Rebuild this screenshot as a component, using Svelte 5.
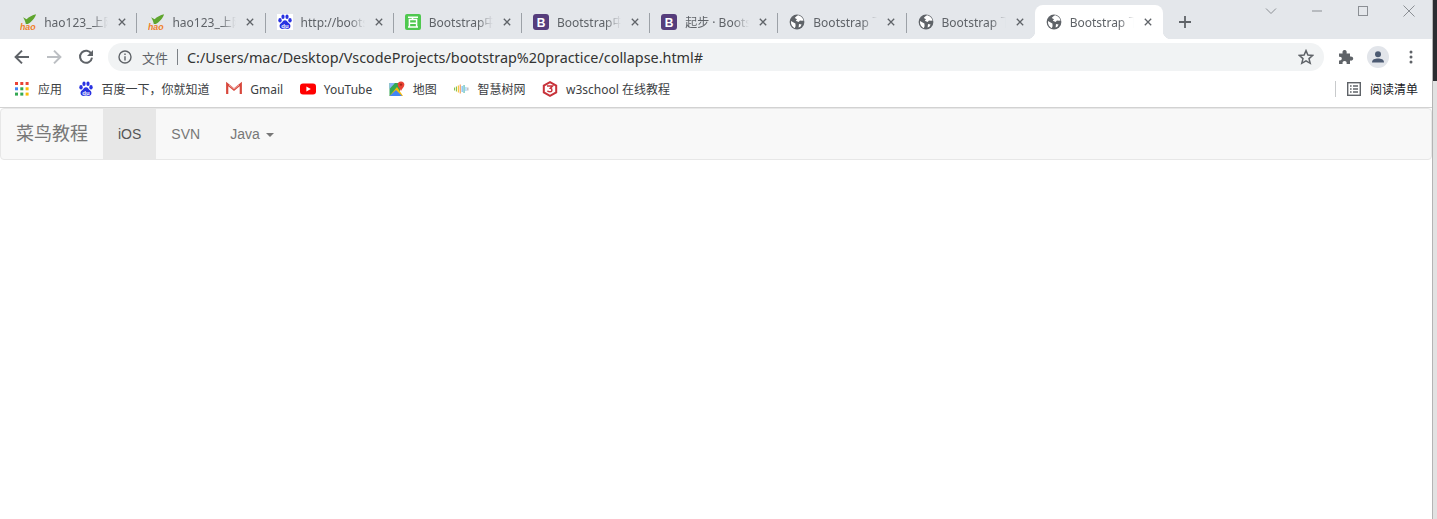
<script>
  const tabs = [
    { icon: 'hao', title: 'hao123_上网从这里开始' },
    { icon: 'hao', title: 'hao123_上网从这里开始' },
    { icon: 'baidu', title: 'http://bootstrap' },
    { icon: 'bai', title: 'Bootstrap中文网' },
    { icon: 'b', title: 'Bootstrap中文网' },
    { icon: 'b', title: '起步 · Bootstrap' },
    { icon: 'globe', title: 'Bootstrap 下拉' },
    { icon: 'globe', title: 'Bootstrap 下拉' },
    { icon: 'globe', title: 'Bootstrap 下拉', active: true }
  ];
  const bookmarks = [
    { icon: 'apps', label: '应用' },
    { icon: 'baidu', label: '百度一下，你就知道' },
    { icon: 'gmail', label: 'Gmail' },
    { icon: 'youtube', label: 'YouTube' },
    { icon: 'maps', label: '地图' },
    { icon: 'bars', label: '智慧树网' },
    { icon: 'w3', label: 'w3school 在线教程' }
  ];
  const appColors = ['#ea4335','#ea4335','#ea4335','#4285f4','#34a853','#fbbc04','#34a853','#34a853','#fbbc04'];
  const barHeights = [
    ['#8bc34a', 3], ['#8bc34a', 5], ['#fbc02d', 7], ['#ef9a5a', 9], ['#64b5f6', 6], ['#4db6ac', 8], ['#90caf9', 4], ['#aaa', 3]
  ];
</script>

{#snippet favicon(name)}
  {#if name === 'hao'}
    <svg class="fav" viewBox="0 0 16 16">
      <path d="M3 3.2 L6.6 5.2 C9 2.8 12.4 1 16 0.2 C15.2 4 11.4 8 7.8 10 L5.8 10 C5.4 7.4 4.4 5.2 3 3.2 Z" fill="#5fa52e"/>
      <text x="0" y="16" class="hao">hao</text>
    </svg>
  {:else if name === 'baidu'}
    <svg class="fav" viewBox="0 0 16 16">
      <rect width="16" height="16" fill="#fff"/>
      <g fill="#2932e1">
        <ellipse cx="3" cy="6.2" rx="1.7" ry="2.2"/>
        <ellipse cx="6" cy="2.8" rx="1.6" ry="2.2"/>
        <ellipse cx="10" cy="2.8" rx="1.6" ry="2.2"/>
        <ellipse cx="13" cy="6.2" rx="1.7" ry="2.2"/>
        <path d="M8 6.2 C6 6.2 5.6 8 4.4 9 C3 10 2.4 11 2.6 12.6 C3 15 5 15.2 6.4 14.8 C7.6 14.5 8.4 14.5 9.6 14.8 C11 15.2 13 15 13.4 12.6 C13.6 11 13 10 11.6 9 C10.4 8 10 6.2 8 6.2 Z"/>
      </g>
      <text x="8" y="13.6" class="du">du</text>
    </svg>
  {:else if name === 'bai'}
    <svg class="fav" viewBox="0 0 16 16">
      <rect width="16" height="16" rx="2" fill="#4fc84f"/>
      <path d="M3 3.2 H13 M8 3.4 L7 5.5 M4.4 5.6 H11.6 V13 H4.4 Z M4.4 9.2 H11.6 M3 13 H13" fill="none" stroke="#fff" stroke-width="1.5"/>
    </svg>
  {:else if name === 'b'}
    <svg class="fav" viewBox="0 0 16 16">
      <rect width="16" height="16" rx="3" fill="#563d7c"/>
      <text x="8" y="12.6" class="bs">B</text>
    </svg>
  {:else if name === 'globe'}
    <svg class="fav" viewBox="0 0 16 16">
      <circle cx="8" cy="8" r="7.4" fill="#5f6368"/>
      <path d="M9.2 1.2 C7.8 2 6.4 2.6 5.8 4 L8 5.2 L6.8 6.8 L9.6 8 L11 6.4 L13 6.8 L14.6 6.4 C14 4 12 1.8 9.2 1.2 Z M2 7 L4.6 8.4 L6.4 9.6 L6.6 12 L5.8 14.2 C3.4 13 1.6 10.6 2 7 Z M10 10 L12.6 10.4 L11.4 12.8 L9.6 13.4 Z" fill="#fff"/>
    </svg>
  {:else if name === 'apps'}
    <svg class="fav" viewBox="0 0 14 14">
      {#each appColors as color, i}
        <rect x={(i % 3) * 5.3} y={Math.floor(i / 3) * 5.3} width="3" height="3" fill={color}/>
      {/each}
    </svg>
  {:else if name === 'gmail'}
    <svg class="fav" viewBox="0 0 16 16">
      <path d="M1.2 13 V3 L8 8.6 L14.8 3 V13" fill="none" stroke="#d8473c" stroke-width="2.2"/>
      <path d="M3 4 L8 8 L13 4" fill="none" stroke="#eda8a2" stroke-width="1"/>
    </svg>
  {:else if name === 'youtube'}
    <svg class="fav" viewBox="0 0 16 16">
      <rect x="0" y="2.4" width="16" height="11.2" rx="3" fill="#f00"/>
      <path d="M6.4 5.4 L10.8 8 L6.4 10.6 Z" fill="#fff"/>
    </svg>
  {:else if name === 'maps'}
    <svg class="fav" viewBox="0 0 16 16">
      <path d="M0.5 2 H11 V15 H0.5 Z" fill="#34a853"/>
      <path d="M0.5 15 L8 6 L14 15 Z" fill="#fbbc04"/>
      <path d="M0.5 15 L7 9 L13 15 Z" fill="#4285f4"/>
      <path d="M0.5 2 H6 L0.5 8 Z" fill="#8ab4f8"/>
      <path d="M12 0.4 C9.8 0.4 8.6 2 8.6 3.6 C8.6 6 11 7.4 12 10 C13 7.4 15.4 6 15.4 3.6 C15.4 2 14.2 0.4 12 0.4 Z" fill="#ea4335"/>
      <circle cx="12" cy="3.6" r="1.2" fill="#a52714"/>
    </svg>
  {:else if name === 'bars'}
    <svg class="fav" viewBox="0 0 16 16">
      {#each barHeights as [color, h], i}
        <rect x={1 + i * 1.9} y={8 - h / 2} width="1.1" height={h} fill={color}/>
      {/each}
    </svg>
  {:else if name === 'w3'}
    <svg class="fav" viewBox="0 0 16 16">
      <path d="M8 1.2 L14.2 4.6 V11.4 L8 14.8 L1.8 11.4 V4.6 Z" fill="none" stroke="#c8323a" stroke-width="2"/>
      <path d="M5 5 H10.6 L8.4 7.3 C10.4 7.6 10.6 10.8 8 10.8 C7 10.8 6.2 10.4 5.4 9.8" fill="none" stroke="#c8323a" stroke-width="1.5"/>
    </svg>
  {/if}
{/snippet}

<div class="screen">
  <div class="browser">
    <div class="tabstrip">
      <div class="tabs">
        {#each tabs as tab, i}
          <div class="tab" class:active={tab.active} class:nosep={tab.active || tabs[i + 1]?.active}>
            {@render favicon(tab.icon)}
            <span class="tab-title">{tab.title}</span>
            <svg class="tab-close" viewBox="0 0 10 10"><path d="M1 1 L9 9 M9 1 L1 9"/></svg>
          </div>
        {/each}
      </div>
      <svg class="new-tab" viewBox="0 0 12 12"><path d="M6 0 V12 M0 6 H12"/></svg>
      <div class="win-controls">
        <svg class="win" viewBox="0 0 12 12"><path d="M1 3.5 L6 8.5 L11 3.5"/></svg>
        <svg class="win" viewBox="0 0 12 12"><path d="M1 6 H11"/></svg>
        <svg class="win" viewBox="0 0 12 12"><rect x="1.5" y="1.5" width="9" height="9"/></svg>
        <svg class="win" viewBox="0 0 12 12"><path d="M0.5 0.5 L11.5 11.5 M11.5 0.5 L0.5 11.5"/></svg>
      </div>
    </div>

    <div class="toolbar">
      <div class="nav-btns">
        <svg class="tool" viewBox="0 0 16 16"><path d="M15 8 H2 M8 1.6 L1.6 8 L8 14.4" class="stroke-dark"/></svg>
        <svg class="tool" viewBox="0 0 16 16"><path d="M1 8 H14 M8 1.6 L14.4 8 L8 14.4" class="stroke-light"/></svg>
        <svg class="tool" viewBox="0 0 16 16"><path d="M13.4 5 A6 6 0 1 0 14 8.6" class="stroke-dark"/><path d="M15 1 V7 H9 Z" class="fill-dark"/></svg>
      </div>
      <div class="omnibox">
        <svg class="info" viewBox="0 0 14 14"><circle cx="7" cy="7" r="6"/><path d="M7 6.2 V10.4 M7 3.6 V5"/></svg>
        <span class="scheme">文件</span>
        <span class="omni-sep"></span>
        <span class="url">C:/Users/mac/Desktop/VscodeProjects/bootstrap%20practice/collapse.html#</span>
        <svg class="star" viewBox="0 0 16 16"><path d="M8 1.6 L9.9 6 L14.7 6.4 L11 9.6 L12.2 14.3 L8 11.8 L3.8 14.3 L5 9.6 L1.3 6.4 L6.1 6 Z"/></svg>
      </div>
      <div class="tool-right">
        <svg class="puzzle" viewBox="0 0 16 16"><path d="M1 4.4 H4.6 C4.2 2.6 4.8 1 6.6 1 C8.4 1 9 2.6 8.6 4.4 H12 V7.6 C13.8 7.2 15.2 8 15.2 9.6 C15.2 11.2 13.8 12 12 11.6 V15 H8.6 C9 13.2 8.2 12 6.6 12 C5 12 4.2 13.2 4.6 15 H1 V11.4 C2.6 11.8 3.8 11 3.8 9.6 C3.8 8.2 2.6 7.4 1 7.8 Z"/></svg>
        <svg class="avatar" viewBox="0 0 22 22"><circle cx="11" cy="11" r="11" fill="#e2e5ea"/><circle cx="11" cy="8.2" r="3" fill="#4c5a72"/><path d="M5 16.4 C5 13.2 8 12.4 11 12.4 C14 12.4 17 13.2 17 16.4 Z" fill="#4c5a72"/></svg>
        <svg class="dots" viewBox="0 0 4 14"><circle cx="2" cy="2" r="1.5"/><circle cx="2" cy="7" r="1.5"/><circle cx="2" cy="12" r="1.5"/></svg>
      </div>
    </div>

    <div class="bookmarks">
      {#each bookmarks as b}
        <div class="bookmark">
          {@render favicon(b.icon)}
          <span>{b.label}</span>
        </div>
      {/each}
      <div class="reading">
        <span class="read-sep"></span>
        <svg class="read-icon" viewBox="0 0 14 14"><rect x="0.7" y="0.7" width="12.6" height="12.6"/><path d="M3 4 H4.6 M6 4 H11 M3 7 H4.6 M6 7 H11 M3 10 H4.6 M6 10 H11"/></svg>
        <span class="read-label">阅读清单</span>
      </div>
    </div>

    <main class="page">
      <nav class="navbar">
        <a class="brand" href="#top">菜鸟教程</a>
        <ul class="nav">
          <li class="on"><a href="#ios">iOS</a></li>
          <li><a href="#svn">SVN</a></li>
          <li><a href="#java">Java <b class="caret"></b></a></li>
        </ul>
      </nav>
    </main>
  </div>
  <div class="edge">
    <div class="edge-dark"></div>
    <div class="edge-grey"></div>
  </div>
</div>

<style>
  :global(body) { margin: 0; background: #fff; overflow: hidden; }
  .screen { display: flex; width: 1437px; height: 519px; font-family: "Noto Sans", "Noto Sans CJK SC", sans-serif; }
  .browser { width: 1432px; display: flex; flex-direction: column; flex: none; }
  .edge { flex: 1; display: flex; flex-direction: column; border-left: 1px solid #b4b4b4; box-sizing: border-box; }
  .edge-dark { height: 81px; background: #2b2d31; }
  .edge-grey { flex: 1; background: #e2e2e2; }

  .tabstrip { height: 39px; background: #e4e7eb; display: flex; align-items: flex-start; flex: none; }
  .tabs { display: flex; padding: 5px 0 0 9.2px; }
  .tab { position: relative; width: 128.2px; height: 34px; box-sizing: border-box; padding-left: 11px; display: flex; align-items: center; flex: none; }
  .tab::after { content: ""; position: absolute; right: 0; top: 8px; width: 1px; height: 20px; background: #9ca1a7; }
  .tab.nosep::after { display: none; }
  .tab.active { background: #fff; border-radius: 8px 8px 0 0; }
  .tab.active::before { content: ""; position: absolute; left: -8px; bottom: 0; width: 8px; height: 8px; background: radial-gradient(circle at 0 0, transparent 8px, #fff 8.5px); }
  .tab.active::after { display: block; right: -8px; top: auto; bottom: 0; width: 8px; height: 8px; background: radial-gradient(circle at 100% 0, transparent 8px, #fff 8.5px); }
  .fav { width: 16px; height: 16px; flex: none; display: block; }
  .tab-title { margin-left: 8px; width: 64px; overflow: hidden; white-space: nowrap; font-size: 12px; color: #5f6368; flex: none; -webkit-mask-image: linear-gradient(90deg, #000 76%, transparent 100%); mask-image: linear-gradient(90deg, #000 76%, transparent 100%); }
  .tab-close { width: 8px; height: 8px; margin-left: 10px; flex: none; fill: none; stroke: #5f6368; stroke-width: 1.6; }
  .hao { font: italic 700 8.8px "Liberation Sans", sans-serif; fill: #f0802a; }
  .du { font: 700 6px "Liberation Sans", sans-serif; fill: #fff; text-anchor: middle; }
  .bs { font: 700 12px "Liberation Sans", sans-serif; fill: #fff; text-anchor: middle; }
  .new-tab { width: 12px; height: 12px; margin: 16px 0 0 16px; flex: none; fill: none; stroke: #5f6368; stroke-width: 1.8; }
  .win-controls { margin-left: auto; display: flex; padding: 5px 17.5px 0 0; gap: 34px; }
  .win { width: 12px; height: 12px; fill: none; stroke: #8b8f94; stroke-width: 1; flex: none; }

  .toolbar { height: 28px; background: #fff; display: flex; padding-top: 4px; flex: none; }
  .nav-btns { width: 108px; display: flex; align-items: center; padding-left: 14px; gap: 16px; box-sizing: border-box; flex: none; }
  .tool { width: 16px; height: 16px; fill: none; flex: none; }
  .stroke-dark { stroke: #5f6368; stroke-width: 2; fill: none; }
  .stroke-light { stroke: #bcbfc3; stroke-width: 2; fill: none; }
  .fill-dark { fill: #5f6368; }
  .omnibox { width: 1216px; height: 28px; background: #f1f3f4; border-radius: 14px; display: flex; align-items: center; padding: 0 10px; box-sizing: border-box; flex: none; }
  .info { width: 14px; height: 14px; fill: none; stroke: #5f6368; stroke-width: 1.4; flex: none; }
  .scheme { margin-left: 10px; font-size: 13px; color: #5f6368; }
  .omni-sep { width: 1px; height: 16px; background: #7c8186; margin: 0 9px; }
  .url { font-size: 14.4px; color: #333; white-space: nowrap; letter-spacing: -0.015px; }
  .star { width: 16px; height: 16px; margin-left: auto; fill: none; stroke: #5f6368; stroke-width: 1.5; flex: none; }
  .tool-right { flex: 1; display: flex; align-items: center; padding-left: 14px; }
  .puzzle { width: 16px; height: 16px; fill: #5f6368; flex: none; }
  .avatar { width: 22px; height: 22px; margin-left: 13px; flex: none; }
  .dots { width: 4px; height: 14px; margin-left: 20px; fill: #5f6368; flex: none; }

  .bookmarks { height: 36px; background: #fff; border-bottom: 1px solid #d2d2d2; display: flex; align-items: center; padding: 0 14px 0 15px; gap: 16.6px; flex: none; }
  .bookmark { display: flex; align-items: center; gap: 8px; font-size: 12px; color: #3c4043; white-space: nowrap; }
  .bookmark:first-child .fav { width: 14px; height: 14px; margin-right: 1px; }
  .bookmark:nth-child(2) { margin-left: -1px; }
  .reading { margin-left: auto; display: flex; align-items: center; }
  .read-sep { width: 1px; height: 16px; background: #c8cacc; }
  .read-icon { width: 14px; height: 14px; margin: 0 9px 0 11px; fill: none; stroke: #5f6368; stroke-width: 1.4; flex: none; }
  .read-label { font-size: 12px; color: #202124; }

  .page { flex: 1; background: #fff; font-family: "Liberation Sans", "Noto Sans CJK SC", sans-serif; }
  .navbar { display: flex; height: 52px; box-sizing: border-box; background: #f8f8f8; border: 1px solid #e7e7e7; border-radius: 4px; }
  .brand { padding: 0 15px; font-size: 18px; line-height: 50px; color: #777; text-decoration: none; }
  .nav { display: flex; list-style: none; margin: 0; padding: 0; }
  .nav a { display: block; padding: 0 15px; font-size: 14px; line-height: 50px; color: #777; text-decoration: none; }
  .nav .on a { background: #e7e7e7; color: #555; }
  .caret { display: inline-block; width: 0; height: 0; margin-left: 2px; vertical-align: middle; border-top: 4px solid #777; border-left: 4px solid transparent; border-right: 4px solid transparent; }
</style>
